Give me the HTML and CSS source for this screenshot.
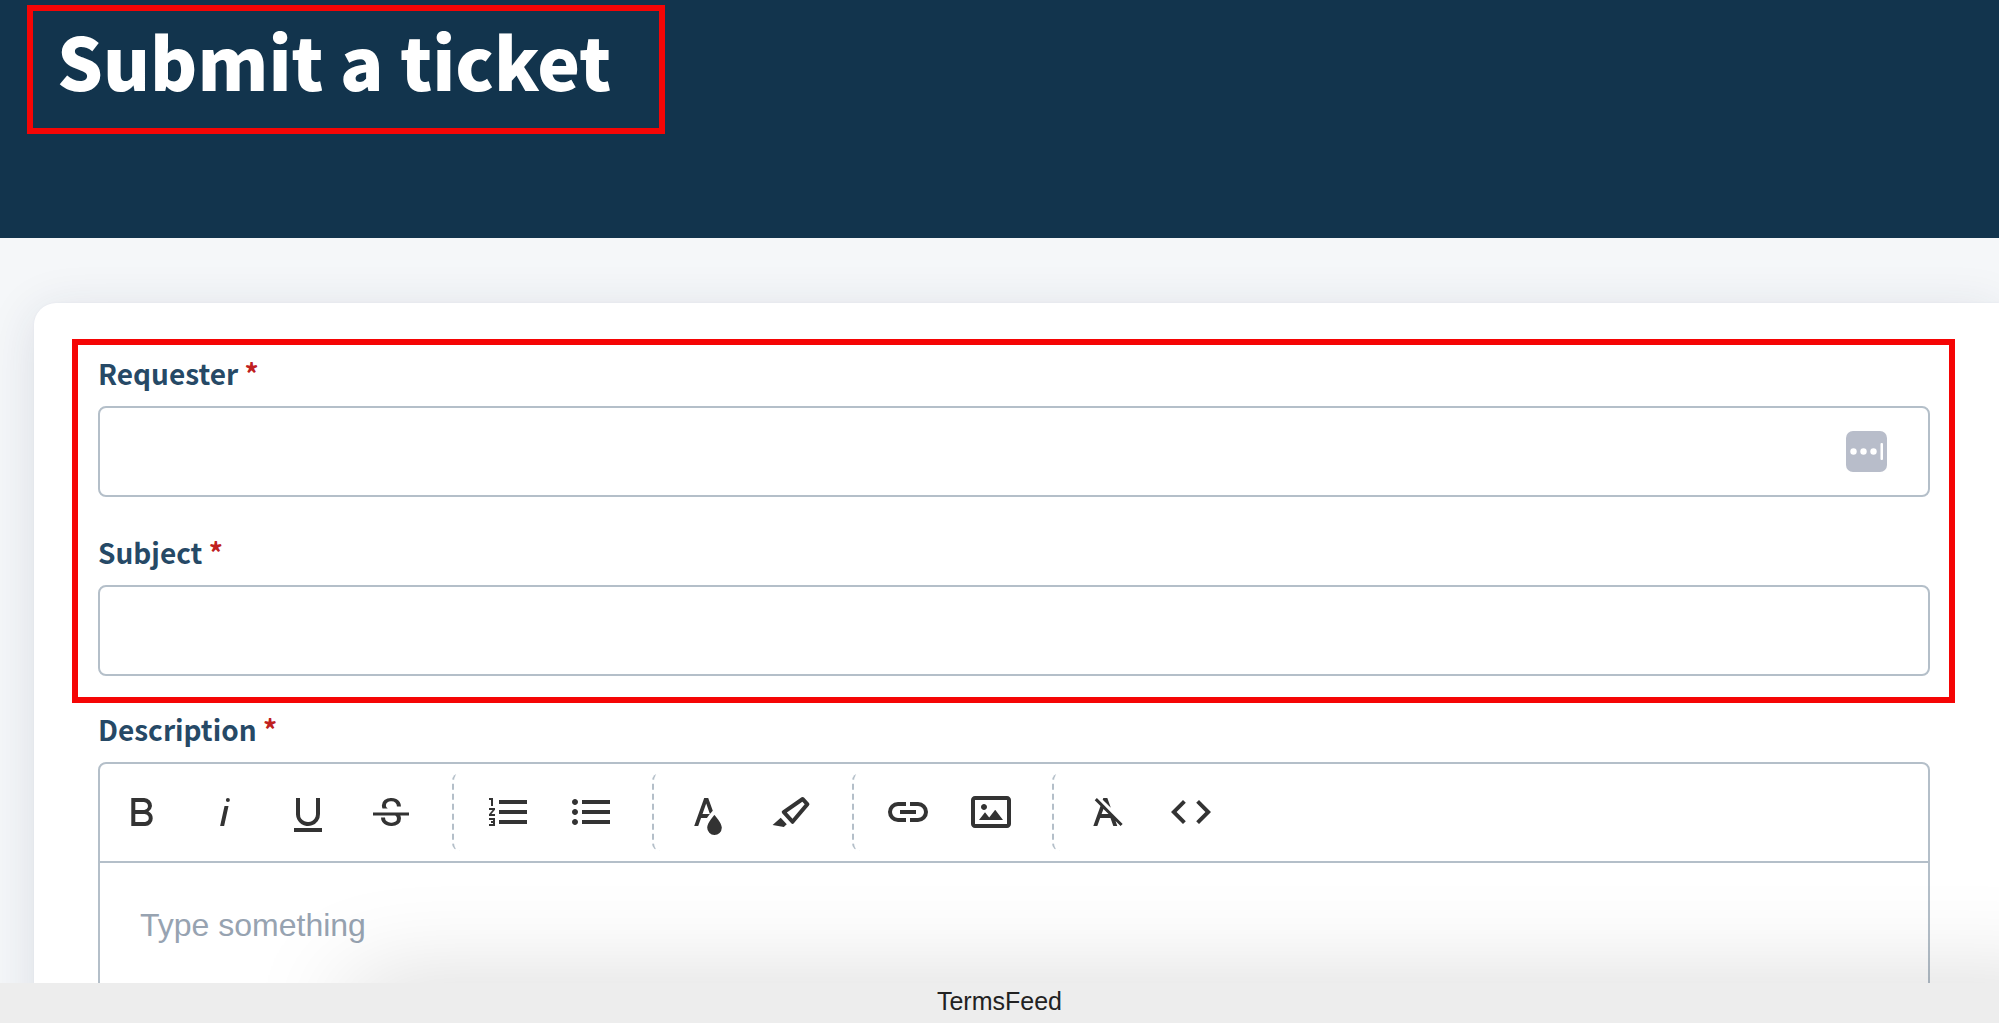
FILE: index.html
```html
<!DOCTYPE html>
<html lang="en">
<head>
    <meta charset="UTF-8">
    <meta name="viewport" content="width=device-width, initial-scale=1.0">
    <title>Submit a ticket</title>
    <link rel="stylesheet" href="styles.css">
</head>
<body>
    <div class="page">
        <header class="page-header">
            <h1 class="page-title">Submit a ticket</h1>
        </header>

        <main>
            <form class="ticket-card">
                <div class="required-fields">
                    <div class="field">
                        <label for="requester">Requester <span class="required">*</span></label>
                        <div class="input-wrap">
                            <input type="text" id="requester" name="requester" required>
                            <button type="button" class="autofill" aria-label="Autofill">
                                <svg viewBox="0 0 41 41">
                                    <circle cx="7.500" cy="20.500" r="3.200"/>
                                    <circle cx="17.500" cy="20.500" r="3.200"/>
                                    <circle cx="27.500" cy="20.500" r="3.200"/>
                                    <rect x="34.500" y="12" width="2.500" height="17" rx="1"/>
                                </svg>
                            </button>
                        </div>
                    </div>
                    <div class="field">
                        <label for="subject">Subject <span class="required">*</span></label>
                        <input type="text" id="subject" name="subject" required>
                    </div>
                </div>

                <div class="field">
                    <label for="description">Description <span class="required">*</span></label>
                    <div class="editor">
                        <div class="toolbar">
                            <div class="tool-group">
                                <button type="button" aria-label="Bold"><svg viewBox="0 0 24 24"><path d="M15.25,11.8h0A3.68,3.68,0,0,0,17,9a3.93,3.93,0,0,0-3.86-4H6.65V19h7a3.74,3.74,0,0,0,3.7-3.78V15.1A3.64,3.64,0,0,0,15.25,11.8ZM8.65,7h4.2a2.09,2.09,0,0,1,2,1.3,2.09,2.09,0,0,1-1.37,2.61,2.23,2.23,0,0,1-.63.09H8.65Zm4.6,10H8.65V13h4.6a2.09,2.09,0,0,1,2,1.3,2.09,2.09,0,0,1-1.37,2.61A2.23,2.23,0,0,1,13.25,17Z"/></svg></button>
                                <button type="button" aria-label="Italic"><svg viewBox="0 0 24 24"><path d="M11.76,9h2l-2.2,10h-2Zm1.68-4a1,1,0,1,0,1,1,1,1,0,0,0-1-1Z"/></svg></button>
                                <button type="button" aria-label="Underline"><svg viewBox="0 0 24 24"><path d="M19,20v2H5V20Zm-3-6.785a4,4,0,0,1-5.74,3.4A3.75,3.75,0,0,1,8,13.085V5.005H6v8.21a6,6,0,0,0,8,5.44,5.851,5.851,0,0,0,4-5.65v-8H16ZM16,5v0h2V5ZM8,5H6v0H8Z"/></svg></button>
                                <button type="button" aria-label="Strikethrough"><svg viewBox="0 0 24 24"><path d="M3,12.20294H21v1.5H16.63422a3.59782,3.59782,0,0,1,.34942,1.5929,3.252,3.252,0,0,1-1.31427,2.6997A5.55082,5.55082,0,0,1,12.20251,19a6.4421,6.4421,0,0,1-2.62335-.539,4.46335,4.46335,0,0,1-1.89264-1.48816,3.668,3.668,0,0,1-.67016-2.15546V14.704h.28723v-.0011h.34149v.0011H9.02v.11334a2.18275,2.18275,0,0,0,.85413,1.83069,3.69,3.69,0,0,0,2.32836.67926,3.38778,3.38778,0,0,0,2.07666-.5462,1.73346,1.73346,0,0,0,.7013-1.46655,1.69749,1.69749,0,0,0-.647-1.43439,3.00525,3.00525,0,0,0-.27491-.17725H3ZM16.34473,7.05981A4.18163,4.18163,0,0,0,14.6236,5.5462,5.627,5.627,0,0,0,12.11072,5,5.16083,5.16083,0,0,0,8.74719,6.06213,3.36315,3.36315,0,0,0,7.44006,8.76855a3.22923,3.22923,0,0,0,.3216,1.42786h2.59668c-.08338-.05365-.18537-.10577-.25269-.16064a1.60652,1.60652,0,0,1-.65283-1.30036,1.79843,1.79843,0,0,1,.68842-1.5108,3.12971,3.12971,0,0,1,1.96948-.55243,3.04779,3.04779,0,0,1,2.106.6687,2.35066,2.35066,0,0,1,.736,1.83258v.11341h2.00317V9.17346A3.90013,3.90013,0,0,0,16.34473,7.05981Z"/></svg></button>
                            </div>
                            <div class="tool-group">
                                <button type="button" aria-label="Ordered list"><svg viewBox="0 0 24 24"><path d="M2.5,16h2v.5h-1v1h1V18h-2v1h3V15h-3Zm1-7h1V5h-2V6h1Zm-1,2H4.3L2.5,13.1V14h3V13H3.7l1.8-2.1V10h-3Zm5-5V8h14V6Zm0,12h14V16H7.5Zm0-5h14V11H7.5Z"/></svg></button>
                                <button type="button" aria-label="Unordered list"><svg viewBox="0 0 24 24"><path d="M4,10.5c-.8,0-1.5.7-1.5,1.5s.7,1.5,1.5,1.5,1.5-.7,1.5-1.5S4.8,10.5,4,10.5Zm0-5c-.8,0-1.5.7-1.5,1.5S3.2,8.5,4,8.5,5.5,7.8,5.5,7,4.8,5.5,4,5.5Zm0,10c-.8,0-1.5.7-1.5,1.5s.7,1.5,1.5,1.5,1.5-.7,1.5-1.5S4.8,15.5,4,15.5ZM7.5,6V8h14V6Zm0,12h14V16h-14Zm0-5h14V11h-14Z"/></svg></button>
                            </div>
                            <div class="tool-group">
                                <button type="button" aria-label="Text color"><svg viewBox="0 0 24 24"><path d="M15.2,13.494s-3.6,3.9-3.6,6.3a3.65,3.65,0,0,0,7.3.1v-.1C18.9,17.394,15.2,13.494,15.2,13.494Zm-1.47-1.357.669-.724L12.1,5h-2l-5,14h2l1.43-4h2.943A24.426,24.426,0,0,1,13.726,12.137ZM11.1,7.8l1.86,5.2H9.244Z"/></svg></button>
                                <button type="button" aria-label="Background color"><svg viewBox="0 0 24 24"><path d="M9.91752,12.24082l7.74791-5.39017,1.17942,1.29591-6.094,7.20747L9.91752,12.24082M7.58741,12.652l4.53533,4.98327a.93412.93412,0,0,0,1.39531-.0909L20.96943,8.7314A.90827.90827,0,0,0,20.99075,7.533l-2.513-2.76116a.90827.90827,0,0,0-1.19509-.09132L7.809,11.27135A.93412.93412,0,0,0,7.58741,12.652ZM2.7939,18.52772,8.41126,19.5l1.47913-1.34617-3.02889-3.328Z"/></svg></button>
                            </div>
                            <div class="tool-group">
                                <button type="button" aria-label="Insert link"><svg viewBox="0 0 24 24"><path d="M11,17H7A5,5,0,0,1,7,7h4V9H7a3,3,0,0,0,0,6h4ZM17,7H13V9h4a3,3,0,0,1,0,6H13v2h4A5,5,0,0,0,17,7Zm-1,4H8v2h8Z"/></svg></button>
                                <button type="button" aria-label="Insert image"><svg viewBox="0 0 24 24"><path fill-rule="evenodd" d="M14.2,11l3.8,5H6l3-3.9l2.1,2.7L14,11H14.2z M8.5,11c0.8,0,1.5-0.7,1.5-1.5S9.3,8,8.5,8S7,8.7,7,9.5C7,10.3,7.7,11,8.5,11z M22,6v12c0,1.1-0.9,2-2,2H4c-1.1,0-2-0.9-2-2V6c0-1.1,0.9-2,2-2h16C21.1,4,22,4.9,22,6z M20,6H4v12h16V6z"/></svg></button>
                            </div>
                            <div class="tool-group">
                                <button type="button" aria-label="Clear formatting"><svg viewBox="0 0 24 24"><path d="M11.48,10.09l-1.2-1.21L8.8,7.41,6.43,5,5.37,6.1,8.25,9,4.66,19h2l1.43-4h5.14l1.43,4h2l-.89-2.51L18.27,19l1.07-1.06L14.59,13.2ZM8.8,13l.92-2.56L12.27,13Zm.56-7.15L9.66,5h2l1.75,4.9Z"/></svg></button>
                                <button type="button" aria-label="Code view"><svg viewBox="0 0 24 24"><path d="M9.4,16.6,4.8,12,9.4,7.4,8,6,2,12l6,6Zm5.2,0L19.2,12,14.6,7.4,16,6l6,6-6,6Z"/></svg></button>
                            </div>
                        </div>
                        <textarea id="description" name="description" rows="6" placeholder="Type something"></textarea>
                    </div>
                </div>
            </form>
        </main>
    </div>

    <footer class="credit">TermsFeed</footer>
</body>
</html>
```

FILE: styles.css
```css
* {
    box-sizing: border-box;
}
body {
    font-family: "Noto Sans CJK SC", "Noto Sans", sans-serif;
    margin: 0;
    height: 100vh;
    display: flex;
    flex-direction: column;
    background-color: #f5f7f9;
}
.page {
    position: relative;
    flex: 1;
    min-height: 0;
    overflow: hidden;
}
/* Soft shadow over the bottom of the form */
.page::after {
    content: "";
    position: absolute;
    top: 100%;
    left: 350px;
    right: -80px;
    height: 80px;
    box-shadow: 0 0 100px rgba(0, 0, 0, 0.17);
    pointer-events: none;
}
.page-header {
    background-color: #12344d;
    padding: 5px 27px 104px;
}
.page-title {
    width: fit-content;
    margin: 0;
    padding: 4px 48px 23px 24px;
    border: 6px solid #f50505;
    color: #fff;
    font-size: 72px;
    font-weight: 900;
    line-height: 90px;
}
.ticket-card {
    margin: 65px 0 0 34px;
    padding: 36px 44px 40px 38px;
    background-color: #fff;
    border-radius: 22px 0 0 0;
    box-shadow: 0 0 2px #dfe3ec, 0 8px 50px rgba(30, 40, 80, 0.12);
}
.required-fields {
    border: 6px solid #f50505;
    padding: 8px 19px 21px 20px;
}
.ticket-card > .field {
    padding: 6px 25px 0 26px;
}
.required-fields .field + .field {
    margin-top: 35px;
}
label {
    display: block;
    color: #264966;
    font-size: 28px;
    font-weight: bold;
    line-height: 40px;
    padding-bottom: 13px;
}
.required {
    color: #c02020;
}
.input-wrap {
    position: relative;
}
input[type="text"] {
    display: block;
    width: 100%;
    height: 91px;
    padding: 0 40px;
    border: 2px solid #b4bfc9;
    border-radius: 8px;
    background-color: #fff;
    font-size: 28px;
}
.autofill {
    position: absolute;
    top: 25px;
    right: 43px;
    width: 41px;
    height: 41px;
    padding: 0;
    border: none;
    border-radius: 7px;
    background-color: #b8bdca;
}
.autofill svg {
    display: block;
    fill: #fff;
}
.editor {
    border: 2px solid #b4bfc9;
    border-radius: 8px;
}
.toolbar {
    display: flex;
    padding: 9px 0 10px;
    border-bottom: 2px solid #b4bfc9;
}
.tool-group {
    display: flex;
    margin-right: 20px;
}
.tool-group + .tool-group {
    padding-left: 12px;
    border-left: 2px dashed #b4bfc9;
    border-radius: 8px;
}
.tool-group button {
    display: flex;
    align-items: center;
    justify-content: center;
    width: 83px;
    height: 78px;
    padding: 0;
    border: none;
    background: none;
    cursor: pointer;
}
.tool-group svg {
    width: 48px;
    height: 48px;
    fill: #333;
}
textarea {
    display: block;
    width: 100%;
    padding: 42px 40px;
    border: none;
    background: none;
    font-family: "Liberation Sans", Arial, sans-serif;
    font-size: 32px;
    line-height: 40px;
    resize: none;
}
textarea::placeholder {
    color: #97a3b1;
}
.credit {
    background-color: #ededed;
    color: #222;
    font-family: "Liberation Sans", Arial, sans-serif;
    font-size: 25px;
    line-height: 36px;
    height: 40px;
    text-align: center;
}
```
